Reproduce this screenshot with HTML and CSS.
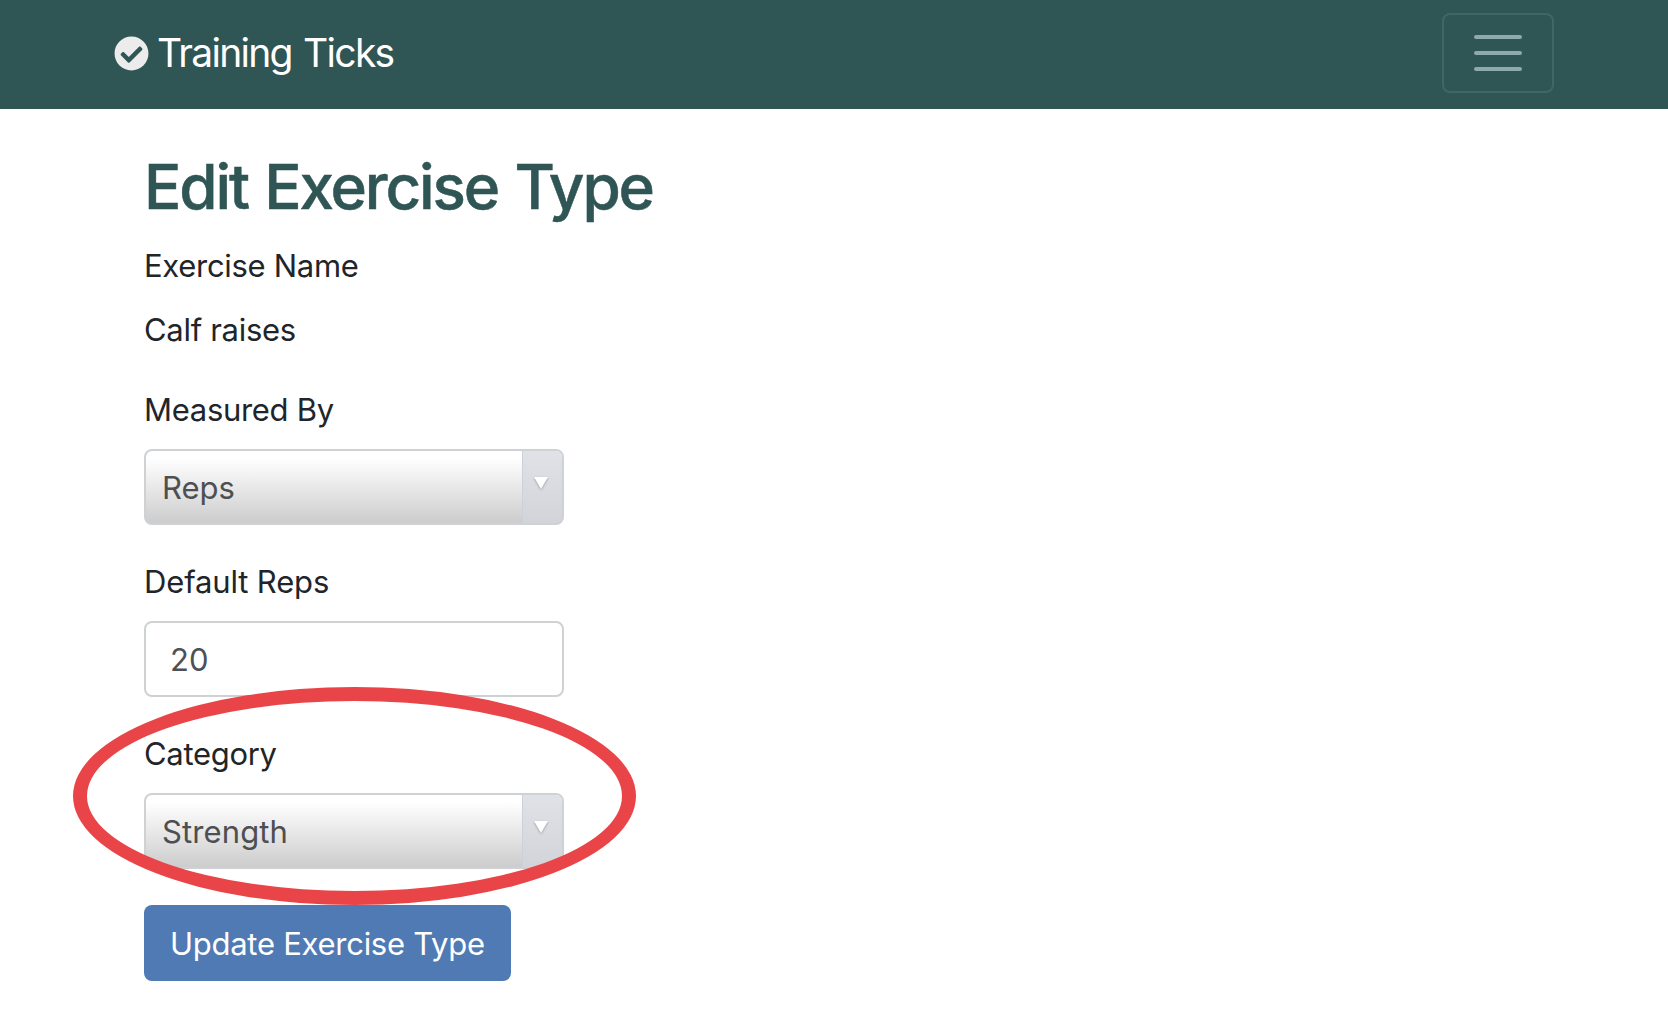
FILE: index.html
```html
<!DOCTYPE html>
<html lang="en">
<head>
<meta charset="utf-8">
<title>Training Ticks</title>
<link rel="stylesheet" href="styles.css">
</head>
<body>
<header class="navbar">
  <a class="brand">
    <svg class="brand-icon" viewBox="0 0 512 512" aria-hidden="true"><path fill="#ececec" d="M504 256c0 136.967-111.033 248-248 248S8 392.967 8 256 119.033 8 256 8s248 111.033 248 248zM227.314 387.314l184-184c6.248-6.248 6.248-16.379 0-22.627l-22.627-22.627c-6.248-6.249-16.379-6.249-22.628 0L216 308.118l-70.059-70.059c-6.248-6.248-16.379-6.248-22.628 0l-22.627 22.627c-6.248 6.248-6.248 16.379 0 22.627l104 104c6.249 6.249 16.379 6.249 22.628.001z"/></svg>
    <span class="brand-name">Training Ticks</span>
  </a>
  <button class="toggler" type="button" aria-label="Menu">
    <span class="bar"></span><span class="bar"></span><span class="bar"></span>
  </button>
</header>
<main class="content">
  <h1 class="title">Edit Exercise Type</h1>
  <form class="form">
    <div class="group static">
      <div class="label">Exercise Name</div>
      <div class="label">Calf raises</div>
    </div>
    <div class="group">
      <div class="label">Measured By</div>
      <div class="select"><span class="select-value">Reps</span><span class="select-arrow"><svg class="caret" viewBox="0 0 18 18"><path d="M2 2h14L9 14z"/></svg></span></div>
    </div>
    <div class="group">
      <label class="label default-reps" for="reps">Default Reps</label>
      <input class="input" id="reps" type="text" value="20">
    </div>
    <div class="group category">
      <div class="label">Category</div>
      <div class="select"><span class="select-value strength">Strength</span><span class="select-arrow"><svg class="caret" viewBox="0 0 18 18"><path d="M2 2h14L9 14z"/></svg></span></div>
      <div class="highlight"></div>
    </div>
    <button class="submit" type="button">Update Exercise Type</button>
  </form>
</main>
</body>
</html>
```
FILE: styles.css
```css
* { box-sizing: border-box; }
body {
  margin: 0;
  background: #fff;
  color: #212529;
  font-family: Inter, "Liberation Sans", sans-serif;
  font-size: 31px;
  line-height: 48px;
}
.navbar {
  height: 109px;
  padding: 13px 114px 15px;
  display: flex;
  justify-content: space-between;
  align-items: flex-start;
  background: #2f5554;
}
.brand { display: flex; align-items: center; height: 80px; color: #fff; }
.brand-icon { width: 35px; height: 35px; margin-right: 8px; }
.brand-name { font-size: 39px; letter-spacing: -1.7px; word-spacing: 2px; white-space: nowrap; }
.toggler {
  width: 112px;
  height: 80px;
  padding: 0;
  display: flex;
  flex-direction: column;
  justify-content: center;
  align-items: center;
  gap: 12px;
  background: none;
  border: 2px solid #416664;
  border-radius: 8px;
}
.bar { width: 48px; height: 4px; border-radius: 2px; background: #8eaaaa; }
.content { padding: 41px 144px 0; }
.title {
  margin: 0 0 18px;
  height: 74px;
  font-size: 62px;
  line-height: 74px;
  font-weight: 500;
  letter-spacing: -2.15px;
  word-spacing: 2px;
  -webkit-text-stroke: 0.5px #2f5554;
  color: #2f5554;
  white-space: nowrap;
}
.form { width: 420px; }
.group { margin-bottom: 33px; }
.static { height: 111px; }
.label {
  display: block;
  width: max-content;
  margin-bottom: 15px;
  letter-spacing: -0.3px;
  white-space: nowrap;
}
.static .label { margin-bottom: 16px; }
.default-reps { letter-spacing: -0.15px; }
.select {
  height: 76px;
  display: flex;
  border: 2px solid #ced2d4;
  border-radius: 8px;
  background: linear-gradient(#fff 12%, #cbcbcb) border-box;
  overflow: hidden;
}
.select-value { flex: 1; padding: 13px 0 0 16px; color: #4d4f52; }
.strength { letter-spacing: 0.12px; }
.select-arrow {
  width: 40px;
  display: flex;
  justify-content: center;
  padding: 24px 3px 0 0;
  background: linear-gradient(#e1e2e8, #d3d4da);
  border-left: 1px solid #ced0d8;
}
.caret { width: 18px; height: 18px; fill: #fff; filter: drop-shadow(0 1px 1px #9a9ba0); }
.input {
  display: block;
  width: 100%;
  height: 76px;
  padding: 0 24px;
  border: 2px solid #ced2d4;
  border-radius: 8px;
  font: inherit;
  color: #4d5156;
  background: #fff;
}
.category { position: relative; margin-bottom: 36px; }
.highlight {
  position: absolute;
  left: -71px;
  top: -43px;
  width: 563px;
  height: 218px;
  border: 14px solid #e94549;
  border-radius: 50%;
}
.submit {
  width: 367px;
  height: 76px;
  padding: 1px 0 0 26px;
  border: 0;
  border-radius: 8px;
  background: #4f7ab4;
  color: #fff;
  font: inherit;
  letter-spacing: -0.27px;
  text-align: left;
  white-space: nowrap;
}
```
